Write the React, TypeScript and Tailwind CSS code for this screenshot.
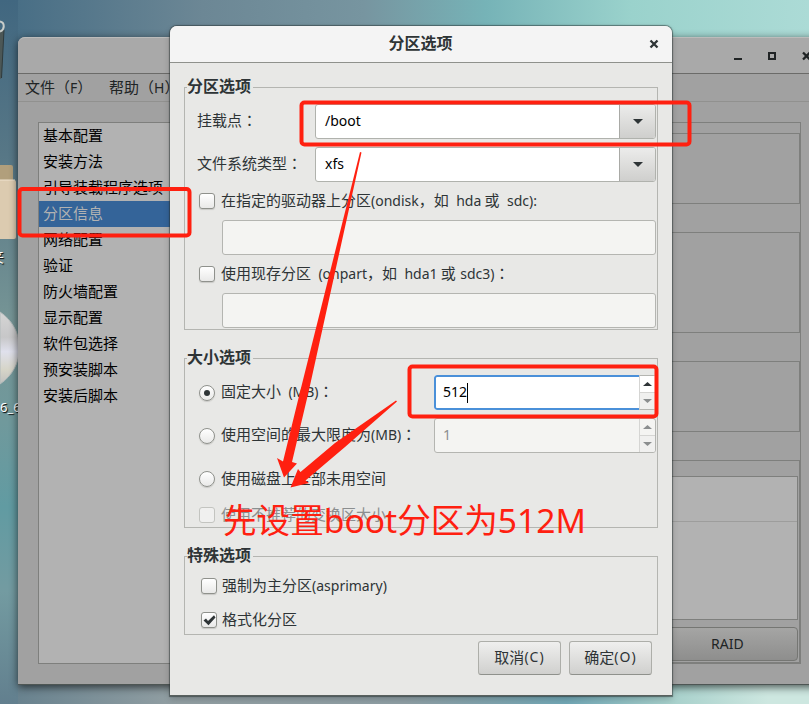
import React from 'react'

const menu = [
  '基本配置', '安装方法', '引导装载程序选项', '分区信息', '网络配置', '验证',
  '防火墙配置', '显示配置', '软件包选择', '预安装脚本', '安装后脚本',
]

function En({ children, className = '' }: { children: React.ReactNode; className?: string }) {
  return <span className={`inline-block whitespace-pre font-['Noto_Sans','Noto_Sans_CJK_SC',sans-serif] text-[14px] ${className}`}>{children}</span>
}

// Full-width colon, centred in its cell
function Colon() {
  return <span className="font-['Noto_Sans_CJK_TC',sans-serif]">：</span>
}

function Check({ checked, disabled }: { checked?: boolean; disabled?: boolean }) {
  return (
    <span className={`flex h-4 w-4 shrink-0 items-center justify-center rounded-[3px] border ${disabled ? 'border-[#c3c4c0] bg-[#f0f0ef]' : 'border-[#8f918c] bg-gradient-to-b from-white to-[#e9e9e8] shadow-[0_1px_1px_#c8c8c5]'}`}>
      {checked && (
        <svg width="14" height="12" viewBox="0 0 14 12" className="shrink-0">
          <path d="M1.500 6.500 4 4.500 6 7 12 1.200 13.500 3.500 6.500 11.200Z" fill="#2e3436" />
        </svg>
      )}
    </span>
  )
}

function Radio({ checked }: { checked?: boolean }) {
  return (
    <span className="flex h-4 w-4 shrink-0 items-center justify-center rounded-full border border-[#8f918c] bg-gradient-to-b from-white to-[#e9e9e8] shadow-[0_1px_1px_#c8c8c5]">
      {checked && <span className="h-1.5 w-1.5 rounded-full bg-[#2e3436]" />}
    </span>
  )
}

function Combo({ value }: { value: string }) {
  return (
    <div className="flex h-[35px] w-[341px] overflow-hidden rounded-[3px] border border-[#b0b2ad] bg-white">
      <div className="flex-1 pl-[9px] text-black">
        <En className="leading-[32px]">{value}</En>
      </div>
      <div className="flex w-9 items-center justify-center border-l border-[#a9aaa6] bg-gradient-to-b from-[#ececeb] to-[#cfcfcd]">
        <svg width="10" height="5" viewBox="0 0 10 5"><path d="M0 0h10L5 5Z" fill="#2e3436" /></svg>
      </div>
    </div>
  )
}

function Spin({ value, active }: { value: string; active?: boolean }) {
  return (
    <div className={`flex h-[35px] w-[222px] overflow-hidden rounded-[3px] ${active ? 'bg-white text-black' : 'border border-[#b4b5b1] bg-[#f4f4f2] text-[#8b8e8f]'}`}>
      <div className={`flex flex-1 items-center ${active ? 'rounded-l-[3px] border-2 border-r-0 border-[#4a90d9] pl-[7px]' : 'pl-2'}`}>
        <En className="pb-[2px]">{value}</En>
        {active && <span className="h-5 w-px bg-black" />}
      </div>
      <div className={`flex flex-col border-l border-[#d5d5d3] ${active ? 'w-[17px] border-y border-r border-r-[#b4b5b1] border-y-[#b4b5b1]' : 'w-4'}`}>
        <div className="flex flex-1 items-center justify-center">
          <svg width="9" height="4" viewBox="0 0 9 4"><path d="M0 4h9L4.500 0Z" fill={active ? '#2e3436' : '#8b8e8f'} /></svg>
        </div>
        <div className="flex flex-1 items-center justify-center border-t border-[#d5d5d3] bg-[#f0f0ef]">
          <svg width="9" height="4" viewBox="0 0 9 4"><path d="M0 0h9L4.500 4Z" fill="#8b8e8f" /></svg>
        </div>
      </div>
    </div>
  )
}

function Frame({ title, className, children }: { title: string; className: string; children: React.ReactNode }) {
  return (
    <fieldset className={`mx-[14px] border border-[#b4b5b1] ${className}`}>
      <legend className="ml-[2px] h-[18px] pr-[2px] text-[16px] font-bold leading-[15px]">{title}</legend>
      {children}
    </fieldset>
  )
}

const label = 'whitespace-nowrap pb-[2px]'
const btn = 'flex h-[34px] w-[83px] items-center justify-center rounded-[3px] border border-[#adaea9] border-b-[#8f918c] bg-gradient-to-b from-[#efefee] to-[#d0d0ce] pb-[2px]'

// The parent window, dimmed while the dialog is open
function MainWindow() {
  return (
    <div className="absolute left-[18px] top-[37px] flex h-[648px] w-[820px] flex-col rounded-t-[7px] border-b border-[#4e5654] bg-[#a1a1a1] shadow-[0_2px_8px_rgba(0,0,0,0.65)]">
      <div className="flex h-[37px] shrink-0 items-center rounded-t-[7px] border-b border-[#6b6b69] border-t border-t-[#bcbcbb] bg-[#a9a9a9] pl-[716px]">
        <svg width="80" height="12" viewBox="0 0 80 12">
          <path d="M0 9h8" stroke="#202425" strokeWidth="2" />
          <path d="M35 3h6v6h-6z" fill="none" stroke="#202425" strokeWidth="2" />
          <path d="m69 2.500 7 7m0-7-7 7" stroke="#202425" strokeWidth="2.300" />
        </svg>
      </div>
      <div className="flex h-7 shrink-0 items-center gap-[14px] border-b border-[#91918f] pl-[7px] text-[#202425]">
        <span className="w-[70px] whitespace-nowrap">文件（<En>F</En>）</span>
        <span className="whitespace-nowrap">帮助（<En>H</En>）</span>
      </div>
      <div className="flex flex-1 pl-5 pt-5">
        <div className="h-[542px] w-[132px] border border-r-0 border-[#7e7f7d] bg-[#b2b2b2]">
          {menu.map((name) => (
            <div key={name} className={`h-[26px] whitespace-nowrap pl-1 leading-[23px] ${name === '分区信息' ? 'bg-[#346499] text-[#b2b2b2]' : 'text-black'}`}>
              {name}
            </div>
          ))}
        </div>
        <div className="flex h-[542px] w-[631px] flex-col border border-[#7e7f7d] pt-[10px]">
          <div className="h-[71px] border border-[#7e7f7d]" />
          <div className="mt-7 h-[101px] border border-[#7e7f7d]" />
          <div className="mt-7 h-[71px] border border-[#7e7f7d]" />
          <div className="mt-7 flex h-[203px] flex-col border border-[#7e7f7d] pt-[15px]">
            <div className="mr-px h-[144px] border border-[#7e7f7d] bg-[#b2b2b2]">
              <div className="h-[45px] border-b border-[#9d9d9c]" />
            </div>
            <div className="mr-px mt-[7px] flex h-[34px] justify-end rounded-[4px] border border-[#757673] bg-gradient-to-b from-[#a5a5a4] to-[#8e8e8d] text-[#202425]">
              <En className="w-[86px] leading-[31px]">RAID</En>
            </div>
          </div>
        </div>
      </div>
    </div>
  )
}

function Dialog() {
  return (
    <div className="absolute left-[170px] top-[26px] flex h-[670px] w-[502px] flex-col rounded-t-[7px] border-b border-[#59605e] bg-[#e8e8e6] text-[#2e3436] shadow-[0_0_1px_1px_rgba(40,50,50,0.55),0_3px_7px_rgba(0,0,0,0.2)]">
      <div className="flex h-[37px] shrink-0 items-center justify-center rounded-t-[7px] border-b border-[#8f918c] bg-[#f4f4f4] pl-[22px] text-[16px] font-bold">
        <span className="flex-1 pb-1 text-center">分区选项</span>
        <svg width="10" height="10" viewBox="0 0 10 10" className="mr-[13px]">
          <path d="m1.500 1.500 7 7m0-7-7 7" stroke="#2e3436" strokeWidth="2.300" />
        </svg>
      </div>

      <Frame title="分区选项" className="mt-[15px] h-[252px]">
        <div className="mt-2 flex items-center justify-between pl-3 pr-px">
          <span className="pb-1">挂载点<Colon /></span>
          <Combo value="/boot" />
        </div>
        <div className="mt-2 flex items-center justify-between pl-3 pr-px">
          <span className="pb-1">文件系统类型<Colon /></span>
          <Combo value="xfs" />
        </div>
        <div className="flex h-[38px] items-center gap-[6px] pl-[14px]">
          <Check />
          <span className={label}>在指定的驱动器上分区<En>(ondisk</En>，如 <En className="ml-1">hda</En> 或 <En className="ml-1">sdc):</En></span>
        </div>
        <div className="ml-[37px] h-[35px] w-[434px] rounded-[3px] border border-[#b4b5b1] bg-[#f4f4f2]" />
        <div className="flex h-[38px] items-center gap-[6px] pl-[14px]">
          <Check />
          <span className={label}>使用现存分区 <En className="ml-1">(onpart</En>，如 <En className="ml-1">hda1</En> 或 <En className="ml-px">sdc3)</En><Colon /></span>
        </div>
        <div className="ml-[37px] h-[35px] w-[434px] rounded-[3px] border border-[#b4b5b1] bg-[#f4f4f2]" />
      </Frame>

      <Frame title="大小选项" className="mt-[19px] h-[179px]">
        <div className="mt-2 flex items-center gap-[6px] pl-[14px] pr-px">
          <Radio checked />
          <span className={`flex-1 ${label}`}>固定大小 <En className="ml-1">(MB)</En><Colon /></span>
          <Spin value="512" active />
        </div>
        <div className="mt-2 flex items-center gap-[6px] pl-[14px] pr-px">
          <Radio />
          <span className={`flex-1 ${label}`}>使用空间的最大限度为<En>(MB)</En><Colon /></span>
          <Spin value="1" />
        </div>
        <div className="mt-2 flex h-[35px] items-center gap-[6px] pl-[14px]">
          <Radio />
          <span className={label}>使用磁盘上全部未用空间</span>
        </div>
        <div className="mt-[7px] flex h-[23px] items-center gap-[6px] pl-[14px] text-[#8b8e8f]">
          <Check disabled />
          <span className={label}>使用不推荐的变换区大小</span>
        </div>
      </Frame>

      <Frame title="特殊选项" className="mt-[19px] h-[88px]">
        <div className="mt-[9px] flex h-[23px] items-center gap-[5px] pl-4">
          <Check />
          <span className="pb-px">强制为主分区<En>(asprimary)</En></span>
        </div>
        <div className="mt-[11px] flex h-[23px] items-center gap-[5px] pl-4">
          <Check checked />
          <span className={label}>格式化分区</span>
        </div>
      </Frame>

      <div className="mt-[6px] flex justify-end gap-2 pr-5">
        <div className={btn}>取消<En className="tracking-[1px]">(C)</En></div>
        <div className={btn}>确定<En className="tracking-[1px]">(O)</En></div>
      </div>
    </div>
  )
}

function DesktopIcons() {
  return (
    <svg className="absolute left-0 top-0" width="22" height="704" viewBox="0 0 22 704">
      <defs>
        <linearGradient id="disc" x1="0" y1="0" x2="0" y2="1">
          <stop offset="0" stopColor="#d5d5d5" />
          <stop offset=".35" stopColor="#c7c7c8" />
          <stop offset=".55" stopColor="#dfe0ec" />
          <stop offset=".8" stopColor="#d6d5c8" />
          <stop offset="1" stopColor="#c0c0bf" />
        </linearGradient>
      </defs>
      <path d="M0 30 4 29 1.500 78 0 79Z" fill="#4c5756" />
      <path d="M4 30 1.500 78" stroke="#2f3a3c" />
      <path d="M0 21.500c5 1 5 8 0 10" fill="none" stroke="#c9cdca" strokeWidth="2" />
      <path d="M0 165h11q2 0 2 2v20H0Z" fill="#b19f7c" />
      <path d="M0 180h14q2 0 2 2v55q0 2-2 2H0Z" fill="#dccbb0" />
      <path d="M0 180h15" stroke="#efe3cf" />
      <path d="M0 312A43 43 0 0 1 0 384Z" fill="url(#disc)" stroke="#b4bbbb" />
    </svg>
  )
}

// Red marks drawn over the windows
function Annotations() {
  return (
    <div className="absolute inset-0 text-[#ff2010]">
      <svg className="absolute left-0 top-0" width="809" height="704" viewBox="0 0 809 704">
        <g fill="none" stroke="currentColor" strokeWidth="4">
          <rect x="19.500" y="189" width="170" height="46.500" rx="3" />
          <rect x="301.500" y="102.500" width="388" height="42" rx="3" />
          <rect x="409.500" y="366.500" width="247" height="50" rx="3" />
        </g>
        <path d="M360 152 361.500 152.500 309 390 292 462 297 463.500 284 477.500 277 458 283 461.500 300.500 390Z" fill="currentColor" />
        <path d="M396 400.500 397 401.500 345 447 305.500 480.500 309 483 290.500 487.500 298 469 300.500 472 335 443Z" fill="currentColor" />
      </svg>
      <div className="absolute left-[223px] top-[497px] whitespace-nowrap font-['Noto_Sans','Noto_Sans_CJK_SC',sans-serif] text-[33.600px] leading-[46px]">先设置boot分区为512M</div>
    </div>
  )
}

export default function App() {
  return (
    <div className="relative h-[704px] w-[809px] overflow-hidden bg-[linear-gradient(90deg,#456c84_0%,#6c8795_25%,#7795a0_45%,#76b3b7_60%,#9ad2cc_78%,#acdbd6_100%)] font-['Noto_Sans_CJK_SC',sans-serif] text-[15px] leading-[22px]">
      <div className="absolute inset-x-0 bottom-0 h-[24px] bg-[linear-gradient(90deg,#647f8c_0%,#929fa3_22%,#8f9fa5_50%,#72a8b6_70%,#a7d0cb_83%,#cde7e0_95%)]" />
      <div className="absolute inset-y-0 left-0 w-[18px] bg-[linear-gradient(180deg,#416780_0%,#577786_22%,#759495_45%,#70999c_60%,#619ba2_72%,#739ba1_84%,#627f8e_100%)]" />
      <DesktopIcons />
      <div className="absolute left-[-11px] top-[245px] text-[15px] text-white [text-shadow:1px_1px_1px_#000]">夹</div>
      <div className="absolute left-0 top-[396px] font-['Noto_Sans',sans-serif] text-[13px] text-white [text-shadow:1px_1px_1px_#000]">6_6</div>
      <MainWindow />
      <Dialog />
      <Annotations />
    </div>
  )
}
